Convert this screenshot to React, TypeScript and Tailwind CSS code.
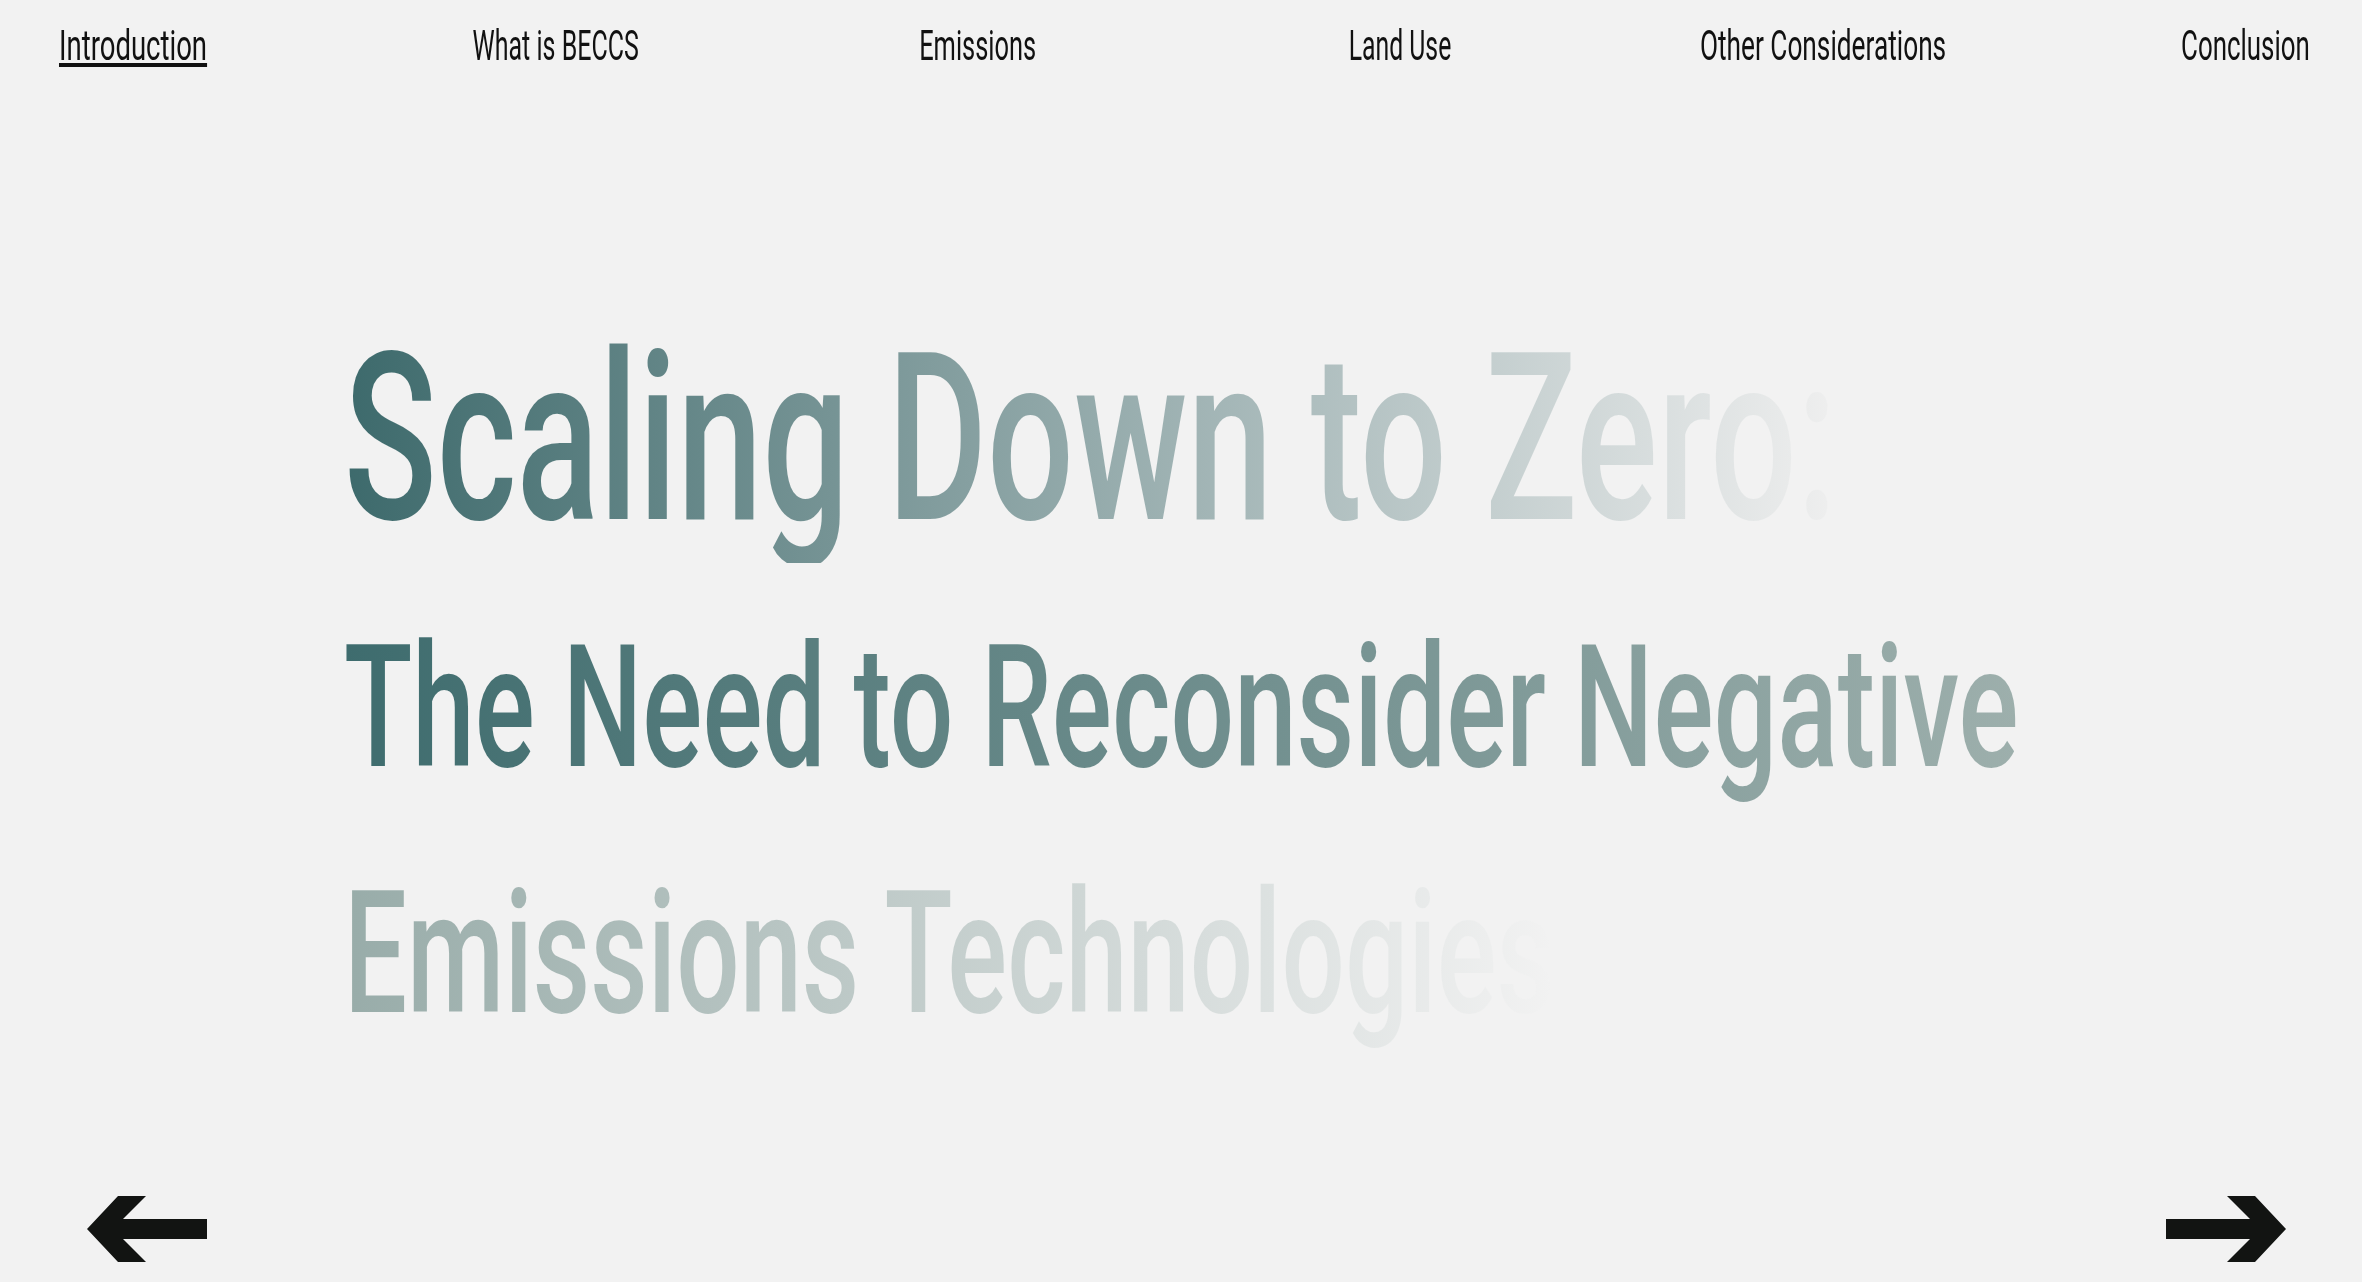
import React from "react";

const navItems = [
  { label: "Introduction", scale: "scale-x-[0.655]" },
  { label: "What is BECCS", scale: "scale-x-[0.595]" },
  { label: "Emissions", scale: "scale-x-[0.605]" },
  { label: "Land Use", scale: "scale-x-[0.59]" },
  { label: "Other Considerations", scale: "scale-x-[0.625]" },
  { label: "Conclusion", scale: "scale-x-[0.616]" },
];

function Arrow({ dir }: { dir: "left" | "right" }) {
  return (
    <svg
      width="120"
      height="66"
      viewBox="0 0 120 66"
      className={dir === "right" ? "-scale-x-100" : ""}
      aria-hidden="true"
    >
      <polygon
        points="0,33 31,0 59,0 36,23 120,23 120,43 36,43 59,66 31,66"
        fill="#121412"
      />
    </svg>
  );
}

export default function App() {
  return (
    <main className="flex h-[1282px] w-full flex-col overflow-hidden bg-[#f2f2f2] font-[family-name:Roboto,'Liberation_Sans',sans-serif] text-[#111]">
      {/* nav */}
      <nav className="flex justify-between pl-[60px] pr-[44px] pt-[16px]">
        {navItems.map((item, i) => (
          <div key={item.label} className="flex w-[146px] justify-center">
            <a
              href="#"
              className={
                "inline-block origin-center whitespace-nowrap text-[42px] leading-[60px] " +
                item.scale +
                (i === 0
                  ? " underline decoration-[4px] underline-offset-[3px]"
                  : "")
              }
            >
              {item.label}
            </a>
          </div>
        ))}
      </nav>

      {/* headline */}
      <section className="flex-1 pl-[344px] pt-[241px]">
        <h1 className="h-[246px] whitespace-nowrap text-[233px] font-medium leading-[246px]">
          <span className="inline-block origin-left scale-x-[0.657] bg-linear-to-r from-[#3d6a6c] to-[#efefef] bg-clip-text text-transparent">
            Scaling Down to Zero:
          </span>
        </h1>
        <h2 className="mt-[22px] whitespace-nowrap text-[170px] font-medium leading-[246px]">
          <span className="block">
            <span className="inline-block origin-left scale-x-[0.66] bg-linear-to-r from-[#3e6c6e] to-[#9dafac] bg-clip-text text-transparent">
              The Need to Reconsider Negative
            </span>
          </span>
          <span className="block">
            <span className="inline-block origin-left scale-x-[0.657] bg-linear-to-r from-[#98aca9] to-[#f2f2f2] bg-clip-text text-transparent">
              Emissions Technologies
            </span>
          </span>
        </h2>
      </section>

      {/* arrows */}
      <footer className="flex items-end justify-between pb-[20px] pl-[87px] pr-[76px]">
        <button type="button" aria-label="Previous">
          <Arrow dir="left" />
        </button>
        <button type="button" aria-label="Next">
          <Arrow dir="right" />
        </button>
      </footer>
    </main>
  );
}
